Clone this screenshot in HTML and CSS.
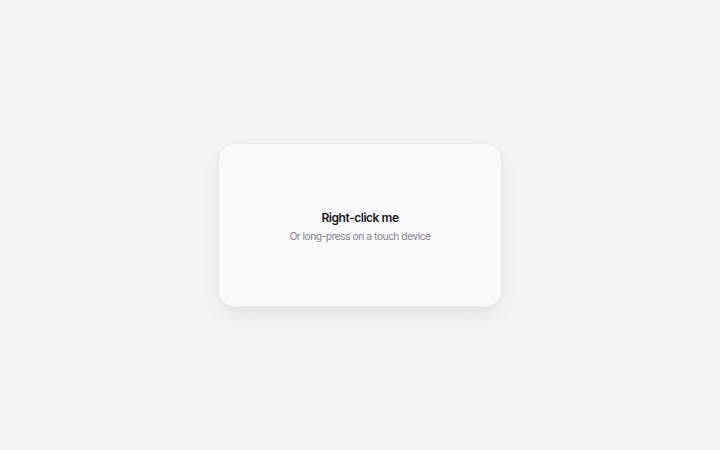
FILE: index.html
```html
<!DOCTYPE html>
<html lang="en">
<head>
<meta charset="utf-8">
<title>Context menu</title>
<link rel="stylesheet" href="styles.css">
</head>
<body>
<main class="stage">
  <div class="card">
    <div class="title">Right-click me</div>
    <div class="hint">Or long-press on a touch device</div>
  </div>
</main>
</body>
</html>
```

FILE: styles.css
```css
html, body {
  margin: 0;
  height: 100%;
}
body {
  background: #f4f4f6;
  font-family: Inter, "Noto Sans", sans-serif;
}
.stage {
  height: 100%;
  display: flex;
  align-items: center;
  justify-content: center;
}
.card {
  box-sizing: border-box;
  width: 284px;
  height: 164px;
  border-radius: 16px;
  background: #f9f9fb;
  border: 1px solid #ebebef;
  box-shadow: 0 8px 20px rgba(0, 0, 0, 0.06), 0 2px 5px rgba(0, 0, 0, 0.03);
  display: flex;
  flex-direction: column;
  align-items: center;
  justify-content: center;
  gap: 4px;
  padding-top: 3px;
}
.title {
  font-size: 12px;
  font-weight: 600;
  letter-spacing: -0.45px;
  color: #18181b;
  line-height: 15px;
}
.hint {
  font-size: 10.3px;
  letter-spacing: -0.5px;
  color: #85858d;
  line-height: 14px;
}
```
